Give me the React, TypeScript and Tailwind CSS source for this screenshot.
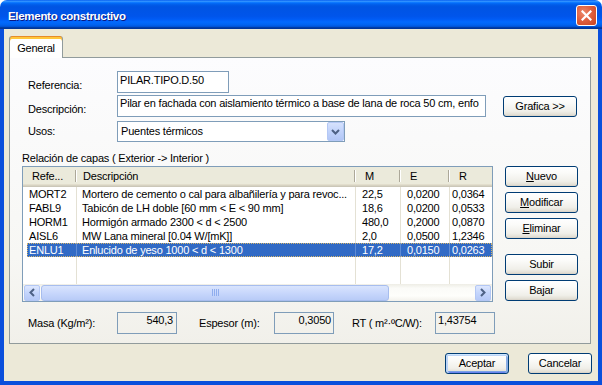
import React from "react";

type BtnProps = { children: React.ReactNode; className?: string; def?: boolean };

function XPButton({ children, className = "", def = false }: BtnProps) {
  return (
    <div
      className={`flex items-center justify-center h-[21px] rounded-[3px] border border-[#003c74] bg-[linear-gradient(180deg,#ffffff_0%,#fbfbf9_30%,#f0efe9_75%,#e3e0d6_92%,#d6d0c5_100%)] text-black whitespace-nowrap ${
        def
          ? "shadow-[inset_0_1px_0_#cee7ff,inset_0_2px_0_#bcd4f6,inset_1px_0_0_#bcd4f6,inset_2px_0_0_#bcd4f6,inset_-1px_0_0_#89ade4,inset_-2px_0_0_#89ade4,inset_0_-1px_0_#6982ee,inset_0_-2px_0_#7ba2e7]"
          : ""
      } ${className}`}
    >
      {children}
    </div>
  );
}

function Chevron({ dir }: { dir: "down" | "left" | "right" }) {
  if (dir === "down")
    return (
      <svg width="9" height="6" viewBox="0 0 9 6">
        <path d="M1 1 L4.5 4.5 L8 1" fill="none" stroke="#4d6185" strokeWidth="2" />
      </svg>
    );
  if (dir === "left")
    return (
      <svg width="6" height="9" viewBox="0 0 6 9">
        <path d="M5 1 L1.5 4.5 L5 8" fill="none" stroke="#4d6185" strokeWidth="2" />
      </svg>
    );
  return (
    <svg width="6" height="9" viewBox="0 0 6 9">
      <path d="M1 1 L4.5 4.5 L1 8" fill="none" stroke="#4d6185" strokeWidth="2" />
    </svg>
  );
}

const rows = [
  ["MORT2", "Mortero de cemento o cal para albañilería y para revoc...", "22,5", "0,0200", "0,0364"],
  ["FABL9", "Tabicón de LH doble [60 mm < E < 90 mm]", "18,6", "0,0200", "0,0533"],
  ["HORM1", "Hormigón armado 2300 < d < 2500", "480,0", "0,2000", "0,0870"],
  ["AISL6", "MW Lana mineral [0.04 W/[mK]]", "2,0", "0,0500", "1,2346"],
  ["ENLU1", "Enlucido de yeso 1000 < d < 1300", "17,2", "0,0150", "0,0263"],
];

function HeaderCell({ children, className }: { children: React.ReactNode; className: string }) {
  return (
    <div className={`relative h-full flex items-center pb-[2px] whitespace-nowrap ${className}`}>
      {children}
      <span className="absolute right-[1px] top-[3px] h-[12px] w-px bg-[#aca899]" />
      <span className="absolute right-0 top-[3px] h-[12px] w-px bg-white" />
    </div>
  );
}

export default function App() {
  return (
    <div className="w-[602px] h-[385px] bg-white font-['Liberation_Sans',Arial,sans-serif] text-[11px] leading-[13px] tracking-[-0.2px] text-black flex flex-col overflow-hidden">
      {/* Title bar */}
      <div className="h-[29px] shrink-0 rounded-t-[7px] bg-[linear-gradient(180deg,#0058ee_0%,#3593ff_4%,#288eff_6%,#127dff_8%,#036ffc_10%,#0262ee_14%,#0057e5_20%,#0054e3_24%,#0055eb_56%,#005bf5_66%,#026afe_76%,#0062ef_86%,#0052d6_92%,#0040ab_94%,#003092_100%)] flex items-start pl-[8px] pr-[5px]">
        <span className="mt-[8px] text-white font-bold text-[11.5px] leading-[16px] tracking-[-0.3px] [text-shadow:1px_1px_0_#0a1883]">
          Elemento constructivo
        </span>
        <div className="ml-auto mt-[5px] w-[21px] h-[21px] rounded-[3px] border border-white bg-[radial-gradient(circle_at_35%_35%,#ec8a6c_0%,#e0603f_45%,#c8421f_100%)] flex items-center justify-center">
          <svg width="11" height="11" viewBox="0 0 11 11">
            <path d="M1.5 1.5 L9.5 9.5 M9.5 1.5 L1.5 9.5" stroke="white" strokeWidth="2.2" strokeLinecap="square" />
          </svg>
        </div>
      </div>

      {/* Body */}
      <div className="flex-1 flex flex-col bg-[#ece9d8] border-x-[4px] border-b-[4px] border-[#0a4fdc] pl-[5px]">
        {/* Tab */}
        <div className="mt-[7px] flex">
          <div className="relative z-10 -mb-px w-[54px] h-[22px] rounded-t-[3px] border-x border-[#919b9c] bg-white flex items-center justify-center pt-[2px] shadow-[inset_0_1px_0_#e68b2c,inset_0_3px_0_#ffc73c]">
            General
          </div>
        </div>

        {/* Panel */}
        <div className="w-[582px] h-[287px] border border-[#919b9c] bg-[linear-gradient(180deg,#fcfcfe_0%,#f7f7f4_70%,#f1f0ea_100%)] pl-[12px] pt-[13px] flex flex-col">
          {/* Referencia */}
          <div className="flex h-[22px]">
            <div className="w-[95px] pl-[6px] pt-[8px]">Referencia:</div>
            <div className="w-[112px] h-[22px] border border-[#7f9db9] bg-white pl-[2px] pt-[2px] whitespace-nowrap overflow-hidden">
              PILAR.TIPO.D.50
            </div>
          </div>

          {/* Descripción */}
          <div className="flex h-[22px] mt-[2px]">
            <div className="w-[95px] pl-[6px] pt-[8px]">Descripción:</div>
            <div className="w-[369px] h-[22px] border border-[#7f9db9] bg-white pl-[2px] pt-[1px] whitespace-nowrap overflow-hidden">
              Pilar en fachada con aislamiento térmico a base de lana de roca 50 cm, enfo
            </div>
            <XPButton className="ml-[17px] mt-[1px] w-[74px]">Grafica &gt;&gt;</XPButton>
          </div>

          {/* Usos */}
          <div className="flex h-[21px] mt-[4px]">
            <div className="w-[95px] pl-[6px] pt-[4px]">Usos:</div>
            <div className="w-[228px] h-[21px] border border-[#7f9db9] bg-white flex items-center">
              <span className="flex-1 pl-[3px] whitespace-nowrap">Puentes térmicos</span>
              <div className="w-[17px] h-[19px] rounded-[2px] border border-[#b4c8f5] bg-[linear-gradient(180deg,#d6e2fd_0%,#c1d3fb_50%,#b2c6f6_100%)] flex items-center justify-center">
                <Chevron dir="down" />
              </div>
            </div>
          </div>

          <div className="mt-[10px] whitespace-nowrap">Relación de capas ( Exterior -&gt; Interior )</div>

          {/* List + side buttons */}
          <div className="flex mt-[1px]">
            <div className="w-[471px] h-[136px] border border-[#7f9db9] bg-white flex flex-col overflow-hidden">
              {/* Header */}
              <div className="h-[20px] shrink-0 flex bg-[#ebeadb] shadow-[inset_0_-1px_0_#cbc7b8,inset_0_-2px_0_#d6d2c2,inset_0_-3px_0_#e2decd]">
                <HeaderCell className="w-[54px] shrink-0 pl-[9px]">Refe...</HeaderCell>
                <HeaderCell className="w-[279px] shrink-0 pl-[6px]">Descripción</HeaderCell>
                <HeaderCell className="w-[45px] shrink-0 pl-[9px]">M</HeaderCell>
                <HeaderCell className="w-[49px] shrink-0 pl-[9px]">E</HeaderCell>
                <HeaderCell className="w-[60px] shrink-0 pl-[9px]">R</HeaderCell>
              </div>

              {/* Rows */}
              <div className="flex-1 flex flex-col">
                {rows.map((r, i) => {
                  const sel = i === 4;
                  return (
                    <div key={r[0]} className="flex h-[14px] pl-[4px]">
                      <div
                        className={`flex flex-1 items-center ${
                          sel
                            ? "bg-[#316ac5] text-white outline-1 outline-dotted outline-[#d6b56a] -outline-offset-1"
                            : ""
                        }`}
                      >
                        <div className={`w-[50px] h-full shrink-0 pl-[2px] flex items-center border-r ${sel ? "border-[#5f8bd3]" : "border-[#e4e1d4]"}`}>
                          {r[0]}
                        </div>
                        <div className={`w-[279px] h-full shrink-0 pl-[5px] flex items-center whitespace-nowrap overflow-hidden border-r ${sel ? "border-[#5f8bd3]" : "border-[#e4e1d4]"}`}>
                          {r[1]}
                        </div>
                        <div className={`w-[45px] h-full shrink-0 pl-[6px] flex items-center border-r ${sel ? "border-[#5f8bd3]" : "border-[#e4e1d4]"}`}>
                          {r[2]}
                        </div>
                        <div className={`w-[49px] h-full shrink-0 pl-[6px] flex items-center border-r ${sel ? "border-[#5f8bd3]" : "border-[#e4e1d4]"}`}>
                          {r[3]}
                        </div>
                        <div className="flex-1 h-full pl-[2px] flex items-center">{r[4]}</div>
                      </div>
                    </div>
                  );
                })}
                {/* filler grid */}
                <div className="flex-1 flex pl-[4px]">
                  <div className="w-[50px] shrink-0 border-r border-[#e4e1d4]" />
                  <div className="w-[279px] shrink-0 border-r border-[#e4e1d4]" />
                  <div className="w-[45px] shrink-0 border-r border-[#e4e1d4]" />
                  <div className="w-[49px] shrink-0 border-r border-[#e4e1d4]" />
                  <div className="flex-1" />
                </div>
              </div>

              {/* Horizontal scrollbar */}
              <div className="h-[17px] shrink-0 flex items-center px-px bg-[linear-gradient(180deg,#eeede5_0%,#fbfbf8_25%,#fefefb_70%,#f3f1ec_100%)]">
                <div className="w-[16px] h-[16px] rounded-[2px] border border-[#b3c7f4] bg-[linear-gradient(180deg,#dde7fe_0%,#c4d5fc_50%,#b5c9f7_100%)] flex items-center justify-center">
                  <Chevron dir="left" />
                </div>
                <div className="ml-px w-[348px] h-[16px] rounded-[3px] border border-[#a7bdee] bg-[linear-gradient(180deg,#d9e4fd_0%,#c8d7fc_50%,#b8cbf7_100%)] flex items-center justify-center gap-px">
                  <span className="w-px h-[7px] bg-[#8fadee]" />
                  <span className="w-px h-[7px] bg-[#8fadee]" />
                  <span className="w-px h-[7px] bg-[#8fadee]" />
                  <span className="w-px h-[7px] bg-[#8fadee]" />
                </div>
                <div className="flex-1" />
                <div className="w-[16px] h-[16px] rounded-[2px] border border-[#b3c7f4] bg-[linear-gradient(180deg,#dde7fe_0%,#c4d5fc_50%,#b5c9f7_100%)] flex items-center justify-center">
                  <Chevron dir="right" />
                </div>
              </div>
            </div>

            {/* Side buttons */}
            <div className="ml-[12px] w-[73px] flex flex-col">
              <XPButton className="w-[73px]">
                <span><span className="underline">N</span>uevo</span>
              </XPButton>
              <XPButton className="w-[73px] mt-[5px]">
                <span><span className="underline">M</span>odificar</span>
              </XPButton>
              <XPButton className="w-[73px] mt-[5px]">
                <span><span className="underline">E</span>liminar</span>
              </XPButton>
              <XPButton className="w-[73px] mt-[15px]">Subir</XPButton>
              <XPButton className="w-[73px] mt-[5px]">Bajar</XPButton>
            </div>
          </div>

          {/* Totals */}
          <div className="flex h-[22px] mt-[10px]">
            <div className="w-[95px] pl-[6px] pt-[5px] whitespace-nowrap">Masa (Kg/m²):</div>
            <div className="w-[60px] h-[22px] border border-[#7f9db9] pt-[1px] pr-[3px] text-right">540,3</div>
            <div className="w-[97px] pl-[22px] pt-[5px] whitespace-nowrap">Espesor (m):</div>
            <div className="w-[60px] h-[22px] border border-[#7f9db9] pt-[1px] pr-[2px] text-right">0,3050</div>
            <div className="w-[101px] pl-[18px] pt-[5px] whitespace-nowrap">RT ( m²·ºC/W):</div>
            <div className="w-[60px] h-[22px] border border-[#7f9db9] pt-[1px] pl-[2px]">1,43754</div>
          </div>
        </div>

        {/* Bottom buttons */}
        <div className="mt-[9px] flex justify-end pr-[6px]">
          <XPButton def className="w-[64px]">Aceptar</XPButton>
          <XPButton className="w-[64px] ml-[19px]">Cancelar</XPButton>
        </div>
      </div>
    </div>
  );
}
